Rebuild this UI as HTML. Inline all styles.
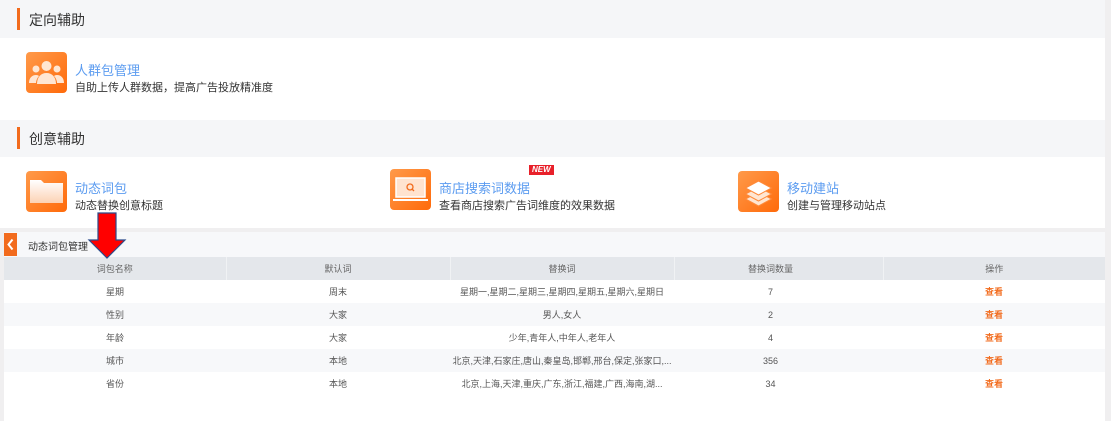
<!DOCTYPE html>
<html><head><meta charset="utf-8"><style>
*{margin:0;padding:0;box-sizing:border-box}
body{width:1111px;height:421px;overflow:hidden;background:#f0eff0;font-family:"Liberation Sans","Noto Sans CJK SC",sans-serif;position:relative}
.abs{position:absolute}
.sec{left:0;width:1105px;background:#f5f6f8}
.sec .bar{position:absolute;left:17px;width:3px;background:#f26b1d}
.sec span{position:absolute;left:29px;font-size:14px;color:#333}
.white{left:0;width:1105px;background:#fff}
.ico{width:41px;height:41px;border-radius:4px;background:linear-gradient(135deg,#ff9a4a,#ff6a0a)}
.t{font-size:13px;color:#5c9cf0}
.d{font-size:11px;color:#333}
table{border-collapse:collapse;table-layout:fixed;font-size:9px;color:#555}
td,th{text-align:center;height:23px;font-weight:normal;white-space:nowrap;overflow:hidden}
th{background:#e4e7eb;color:#666;border-left:1px solid #f0f2f4}
th:first-child{border-left:none}
tr.g td{background:#f7f8fa}
.v{color:#f26b1d;font-weight:bold}
</style></head><body>
<div class="abs sec" style="top:0;height:38px"><div class="bar" style="top:8px;height:22px"></div><span style="top:10px">定向辅助</span></div>
<div class="abs white" style="top:38px;height:82px"></div>
<div class="abs sec" style="top:120px;height:37px"><div class="bar" style="top:7px;height:22px"></div><span style="top:9px">创意辅助</span></div>
<div class="abs white" style="top:157px;height:71px"></div>

<div class="abs ico" style="left:26px;top:52px">
<svg width="41" height="41" viewBox="0 0 41 41"><g fill="#ffe6d2"><circle cx="20.5" cy="14" r="5"/><path d="M11 32c0-7 4-11 9.5-11s9.5 4 9.5 11z"/><circle cx="10" cy="17" r="3.5"/><path d="M3 31c0-5 3-8 7-8 2 0 3 1 3 1-2 2-3 5-3 7z"/><circle cx="31" cy="17" r="3.5"/><path d="M38 31c0-5-3-8-7-8-2 0-3 1-3 1 2 2 3 5 3 7z"/></g></svg></div>
<div class="abs t" style="left:75px;top:60px">人群包管理</div>
<div class="abs d" style="left:75px;top:79px">自助上传人群数据，提高广告投放精准度</div>

<div class="abs ico" style="left:26px;top:171px">
<svg width="41" height="41" viewBox="0 0 41 41"><defs><linearGradient id="f" x1="0" y1="0" x2="0" y2="1"><stop offset="0" stop-color="#fff"/><stop offset="1" stop-color="#fcd2b4"/></linearGradient></defs><path d="M4 9h11l3 3h19v20H4z" fill="url(#f)"/></svg></div>
<div class="abs t" style="left:75px;top:178px">动态词包</div>
<div class="abs d" style="left:75px;top:197px">动态替换创意标题</div>

<div class="abs ico" style="left:390px;top:169px">
<svg width="41" height="41" viewBox="0 0 41 41"><rect x="6" y="9" width="29" height="19" fill="#ffe3cf" stroke="#fff" stroke-width="1.5"/><rect x="3" y="30" width="35" height="2" fill="#fff"/><circle cx="20" cy="18" r="3" fill="none" stroke="#f26b1d" stroke-width="1.3"/><path d="M22 20l2 2" stroke="#f26b1d" stroke-width="1.3"/></svg></div>
<div class="abs" style="left:529px;top:165px;background:#e8202a;color:#fff;font-size:8px;font-weight:bold;font-style:italic;padding:0 3px;line-height:10px">NEW</div>
<div class="abs t" style="left:439px;top:178px">商店搜索词数据</div>
<div class="abs d" style="left:439px;top:197px">查看商店搜索广告词维度的效果数据</div>

<div class="abs ico" style="left:738px;top:171px">
<svg width="41" height="41" viewBox="0 0 41 41"><g fill="#ffe6d2" stroke="#ff8a3a" stroke-width="1"><path d="M20.5 21l-13 7 13 7 13-7z"/><path d="M20.5 16l-13 7 13 7 13-7z"/><path d="M20.5 10l-13 7 13 7 13-7z" fill="#fff"/></g></svg></div>
<div class="abs t" style="left:787px;top:178px">移动建站</div>
<div class="abs d" style="left:787px;top:197px">创建与管理移动站点</div>

<div class="abs" style="left:4px;top:232px;width:1101px;height:189px;background:#fff"></div>
<div class="abs" style="left:4px;top:232px;width:1101px;height:25px;background:#f7f8fa"></div>
<div class="abs" style="left:4px;top:233px;width:13px;height:23px;background:#f26b1d"><svg width="13" height="23"><path d="M8.5 6.5L4.5 11.5l4 5" fill="none" stroke="#fff" stroke-width="2"/></svg></div>
<div class="abs" style="left:28px;top:238px;font-size:10px;color:#333">动态词包管理</div>

<table class="abs" style="left:4px;top:257px;width:1101px">
<colgroup><col style="width:222px"><col style="width:224px"><col style="width:224px"><col style="width:209px"><col style="width:222px"></colgroup>
<tr><th>词包名称</th><th>默认词</th><th>替换词</th><th style="padding-right:16px">替换词数量</th><th>操作</th></tr>
<tr><td>星期</td><td>周末</td><td>星期一,星期二,星期三,星期四,星期五,星期六,星期日</td><td style="padding-right:16px">7</td><td class="v">查看</td></tr>
<tr class="g"><td>性别</td><td>大家</td><td>男人,女人</td><td style="padding-right:16px">2</td><td class="v">查看</td></tr>
<tr><td>年龄</td><td>大家</td><td>少年,青年人,中年人,老年人</td><td style="padding-right:16px">4</td><td class="v">查看</td></tr>
<tr class="g"><td>城市</td><td>本地</td><td>北京,天津,石家庄,唐山,秦皇岛,邯郸,邢台,保定,张家口,...</td><td style="padding-right:16px">356</td><td class="v">查看</td></tr>
<tr><td>省份</td><td>本地</td><td>北京,上海,天津,重庆,广东,浙江,福建,广西,海南,湖...</td><td style="padding-right:16px">34</td><td class="v">查看</td></tr>
</table>

<svg class="abs" style="left:86px;top:211px" width="42" height="50"><path d="M12 2h18v27h9L21 47 3 29h9z" fill="#f00" stroke="#2a4a8a" stroke-width="1.2"/></svg>
</body></html>
